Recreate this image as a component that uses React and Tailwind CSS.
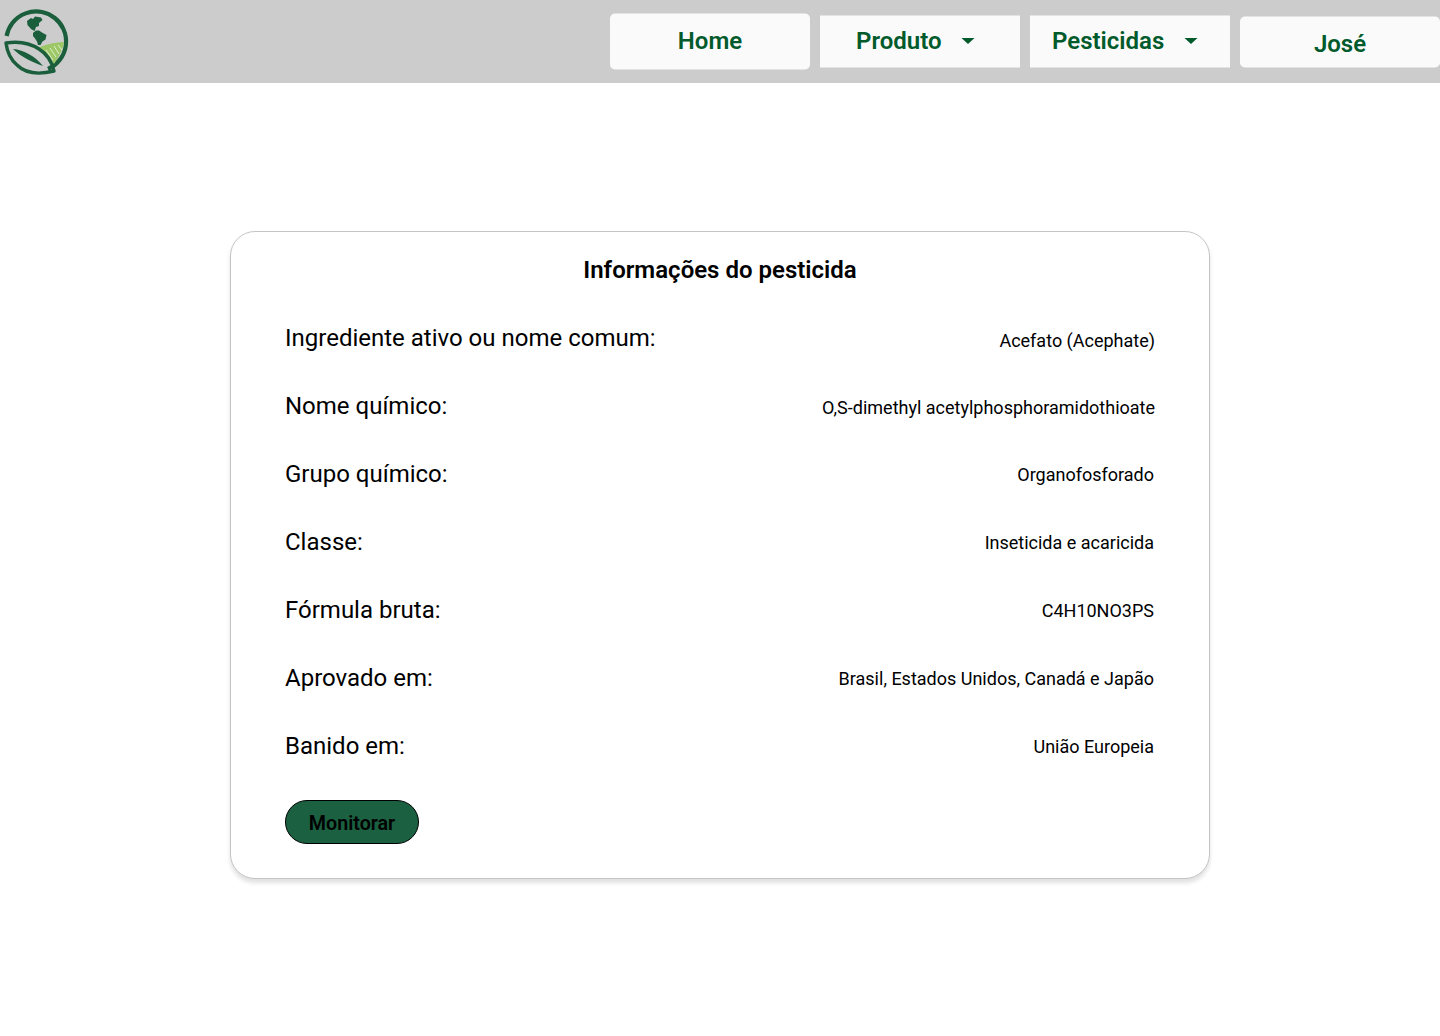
import React from 'react';

const rows = [
  ['Ingrediente ativo ou nome comum:', 'Acefato (Acephate)', 'pt-[6px]'],
  ['Nome químico:', 'O,S-dimethyl acetylphosphoramidothioate', 'pt-[4px]'],
  ['Grupo químico:', 'Organofosforado', 'pt-[2px] pr-[1px]'],
  ['Classe:', 'Inseticida e acaricida', 'pt-[2px] pr-[1px]'],
  ['Fórmula bruta:', 'C4H10NO3PS', 'pt-[2px] pr-[1px]'],
  ['Aprovado em:', 'Brasil, Estados Unidos, Canadá e Japão', 'pt-[2px] pr-[1px]'],
  ['Banido em:', 'União Europeia', 'pt-[2px] pr-[1px]'],
];

function Logo() {
  return (
    <svg width="72" height="83" viewBox="0 0 72 83" className="shrink-0">
      {/* globe ring */}
      <path d="M6.6 36 A30 30 0 1 1 48 69" fill="none" stroke="#1a5e3c" strokeWidth="4.2" />
      {/* field */}
      <path d="M38 48 C45 44.5 53 42.5 64 42 C63 49 59 57 54 64 C50 56 44 51 38 48 Z" fill="#9cc766" />
      <path d="M46 50 L53 60 M50 48 L56 57 M54 46 L59 54 M58 45 L62 50" stroke="#e2efcf" strokeWidth="1" fill="none" />
      {/* leaf */}
      <path d="M6 43 C18 41 30 43 39 49 C47 54 52 62 54 71 C42 74 27 75 17 65 C10 59 7 51 6 43 Z" fill="none" stroke="#1a5e3c" strokeWidth="3.4" strokeLinejoin="round" />
      <path d="M13 49 C24 50 35 56 43 66 C32 62 21 57 13 49 Z" fill="#1a5e3c" />
      {/* continents */}
      <path d="M27 21 L31 18 L33 19 L35 16.5 L41 17.5 L42.5 20 L39 23 L39 26 L36 27 L34.5 31 L31 29 L27.5 25 Z" fill="#1a5e3c" />
      <path d="M33 33 L36 30.5 L39 30.5 L42 32.5 L46.5 35 L45.5 39.5 L42.5 41.5 L40.5 45 L38 45 L37 41.5 L35 38.5 L33 36 Z" fill="#1a5e3c" />
    </svg>
  );
}

function Caret() {
  return (
    <svg width="14" height="7" viewBox="0 0 14 7" className="shrink-0">
      <path d="M0.5 0.5 H13.5 L7 6.5 Z" fill="#005a2b" />
    </svg>
  );
}

export default function App() {
  return (
    <div className="min-h-[1036px] bg-white font-['Roboto',sans-serif] text-black">
      {/* Navbar */}
      <header className="flex h-[83px] items-center justify-between bg-[#cccccc]">
        <Logo />
        <nav className="flex items-center gap-[10px] text-[24px] font-semibold text-[#005a2b]">
          <a className="flex h-[56px] w-[200px] -translate-y-[0.5px] items-center justify-center rounded-[5px] bg-[#fafafa] pb-[1px]">Home</a>
          <button className="flex h-[52px] w-[200px] -translate-y-[0.5px] items-center gap-[19px] bg-[#fafafa] pb-[1px] pl-[36px] font-semibold">
            Produto <Caret />
          </button>
          <button className="flex h-[52px] w-[200px] -translate-y-[0.5px] items-center gap-[20px] bg-[#fafafa] pb-[1px] pl-[22px] font-semibold">
            Pesticidas <Caret />
          </button>
          <a className="flex h-[51px] w-[200px] translate-y-[0.5px] items-center justify-center rounded-[5px] bg-[#fafafa] pt-[3px]">José</a>
        </nav>
      </header>

      {/* Card */}
      <main className="flex justify-center pt-[148px]">
        <section className="h-[648px] w-[980px] rounded-[25px] border border-[#c4c4c4] bg-white px-[54px] pt-[22px] shadow-[0_4px_4px_rgba(0,0,0,0.12)]">
          <h1 className="text-center text-[24px] leading-[32px] font-semibold">Informações do pesticida</h1>
          <div className="mt-[18px] flex flex-col">
            {rows.map(([label, value, offset]) => (
              <div key={label} className="flex h-[68px] items-center justify-between">
                <span className="text-[24px] leading-[32px]">{label}</span>
                <span className={`${offset} text-[18px] leading-[24px]`}>{value}</span>
              </div>
            ))}
          </div>
          <button className="mt-[20px] h-[44px] w-[134px] rounded-[22px] border border-black bg-[#1b6040] pt-[3px] text-[19.7px] font-semibold">
            Monitorar
          </button>
        </section>
      </main>
    </div>
  );
}
